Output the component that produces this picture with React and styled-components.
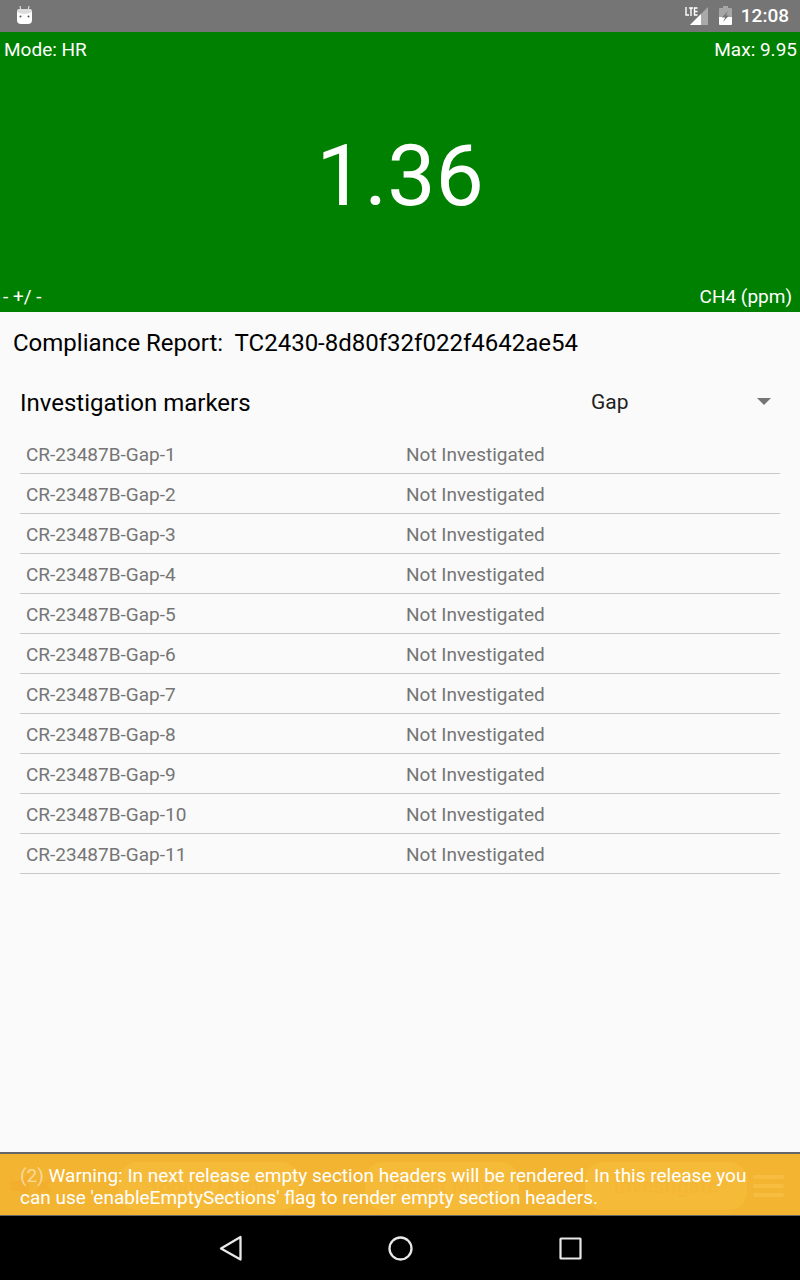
import React, { useState } from "react";
import styled, { createGlobalStyle } from "styled-components";

const GlobalStyle = createGlobalStyle`
  *, *::before, *::after { box-sizing: border-box; }
  body {
    margin: 0;
    background: #fafafa;
    color: #000;
    font-family: Roboto, "Liberation Sans", sans-serif;
  }
`;

const Screen = styled.div`
  display: flex;
  flex-direction: column;
  min-height: 100vh;
`;

const StatusBar = styled.header`
  display: flex;
  align-items: center;
  justify-content: space-between;
  height: 32px;
  padding: 0 11px 0 16px;
  background: #757575;
  color: #fff;
`;

const StatusGroup = styled.div`
  display: flex;
  align-items: center;
  gap: ${(p) => p.$gap || 0}px;
  svg { display: block; }
`;

const Clock = styled.time`
  font-size: 19px;
  font-weight: 500;
  line-height: 32px;
`;

const Reading = styled.section`
  display: flex;
  flex-direction: column;
  justify-content: space-between;
  height: 280px;
  background: #008000;
  color: #fff;
`;

const ReadingRow = styled.div`
  display: flex;
  justify-content: space-between;
  padding: ${(p) => (p.$bottom ? "0 8px 4px 3px" : "7px 3px 0 4px")};
  font-size: 19px;
  line-height: 22px;
`;

const ReadingValue = styled.output`
  padding-top: 4px;
  font-size: 86px;
  line-height: 104px;
  text-align: center;
`;

const Report = styled.main`
  flex: 1;
  padding: 16px 20px;
`;

const ReportTitle = styled.h1`
  margin: 0 -7px;
  font-size: 24px;
  font-weight: 400;
  line-height: 30px;
  white-space: pre-wrap;
`;

const MarkerHeader = styled.div`
  display: flex;
  align-items: center;
  justify-content: space-between;
  height: 60px;
  margin-top: 14px;
`;

const MarkerTitle = styled.h2`
  margin: 0;
  padding-top: 2px;
  font-size: 24px;
  font-weight: 400;
`;

const SelectField = styled.label`
  display: flex;
  align-items: center;
  width: 200px;
  padding-right: 9px;
`;

const KindSelect = styled.select`
  appearance: none;
  flex: 1;
  min-width: 0;
  height: 48px;
  margin-right: -14px;
  padding: 0 24px 0 11px;
  border: 0;
  background: transparent;
  color: #212121;
  font: 400 21px/24px Roboto, "Liberation Sans", sans-serif;
`;

const Caret = styled.svg`
  flex: none;
  margin-bottom: 2px;
  pointer-events: none;
`;

const MarkerTable = styled.table`
  width: 100%;
  margin-top: 1px;
  border-collapse: collapse;
  table-layout: fixed;
`;

const MarkerCell = styled.td`
  height: 40px;
  padding: 4px 6px 0;
  border-bottom: 1px solid #c8c8c8;
  color: #757575;
  font-size: 19px;
  line-height: 22px;
`;

const Footer = styled.footer`
  display: grid;
  height: 64px;
  border-top: 2px solid #666;
  border-bottom: 1px solid #666;
  background: #f2b431;
`;

const Toolbar = styled.nav`
  grid-area: 1 / 1;
  display: flex;
  align-items: center;
  justify-content: space-between;
  padding: 2px 16px 0 11px;
`;

const ToolGroup = styled.div`
  display: flex;
  gap: ${(p) => p.$gap}px;
  align-items: center;
`;

const IconButton = styled.button`
  padding: 0;
  border: 0;
  background: transparent;
  color: ${(p) => (p.$bright ? "#f7bd40" : "#f3ae2e")};
  svg { display: block; }
`;

const ToolButton = styled.button`
  width: ${(p) => p.$width}px;
  height: 48px;
  padding: 0;
  border: 0;
  border-radius: 18px;
  background: #f6ba39;
  color: #f4b634;
  font: 700 21px/24px Roboto, "Liberation Sans", sans-serif;
`;

const Warning = styled.p`
  grid-area: 1 / 1;
  z-index: 1;
  margin: 0;
  padding: 11px 20px 0;
  color: #fff;
  font-size: 19px;
  line-height: 22px;
  pointer-events: none;
`;

const WarningCount = styled.span`
  opacity: 0.5;
`;

const SystemBar = styled.nav`
  display: flex;
  align-items: center;
  justify-content: center;
  gap: 122px;
  height: 64px;
  background: #000;
`;

const SystemButton = styled.button`
  width: 48px;
  height: 48px;
  padding: 0;
  border: 0;
  background: transparent;
  svg { display: block; }
`;

const markers = Array.from({ length: 11 }, (_, i) => ({
  id: `CR-23487B-Gap-${i + 1}`,
  status: "Not Investigated",
}));

const DroidIcon = () => (
  <svg width="17" height="20" viewBox="0 0 17 20" aria-hidden="true">
    <path d="M4 0l1 5M13 0l-1 5" stroke="#ddd" strokeWidth="1.2" />
    <path d="M1 6Q1 3 4 3h9q3 0 3 3v8q0 4-4 4H5q-4 0-4-4z" fill="#fff" />
    <path d="M1 6Q1 3 4 3h9q3 0 3 3-4 2-7.500 2T1 6z" fill="#dcdcdc" />
    <circle cx="4.500" cy="10.500" r="1" fill="#555" />
    <circle cx="12.500" cy="10.500" r="1" fill="#555" />
  </svg>
);

const SignalIcon = () => (
  <svg width="24" height="20" viewBox="0 0 24 20" aria-hidden="true">
    <path d="M23 1v18H5z" fill="#a9a9a9" />
    <path d="M16 8v11H5z" fill="#fff" />
    <path d="M1 1v8h3M4 2h4M6 2v8M12 2H9v7h3M9 5.500h3" fill="none" stroke="#757575" strokeWidth="3" />
    <path d="M1 1v8h3M4 2h4M6 2v8M12.500 2H9.500v7h3M9.500 5.500h3" fill="none" stroke="#fff" strokeWidth="1.400" />
  </svg>
);

const BatteryIcon = () => (
  <svg width="13" height="20" viewBox="0 0 13 20" aria-hidden="true">
    <path d="M4 0h5v2h3q1 0 1 1v8H0V3q0-1 1-1h3z" fill="#a6a6a6" />
    <path d="M0 11h13v7q0 1-1 1H1q-1 0-1-1z" fill="#fff" />
    <path d="M9 5l-6 6.500h3.200L4 16l6-6.500H7z" fill="#757575" />
  </svg>
);

export default function App() {
  const [kind, setKind] = useState("Gap");
  return (
    <>
      <GlobalStyle />
      <Screen>
        <StatusBar>
          <StatusGroup><DroidIcon /></StatusGroup>
          <StatusGroup $gap={9}>
            <StatusGroup $gap={10}>
              <SignalIcon />
              <BatteryIcon />
            </StatusGroup>
            <Clock>12:08</Clock>
          </StatusGroup>
        </StatusBar>
        <Reading>
          <ReadingRow><span>Mode: HR</span><span>Max: 9.95</span></ReadingRow>
          <ReadingValue>1.36</ReadingValue>
          <ReadingRow $bottom><span>- +/ -</span><span>CH4 (ppm)</span></ReadingRow>
        </Reading>
        <Report>
          <ReportTitle>{"Compliance Report:  TC2430-8d80f32f022f4642ae54"}</ReportTitle>
          <MarkerHeader>
            <MarkerTitle>Investigation markers</MarkerTitle>
            <SelectField>
              <KindSelect aria-label="Marker type" value={kind} onChange={(e) => setKind(e.target.value)}>
                <option>Gap</option>
              </KindSelect>
              <Caret width="14" height="7" viewBox="0 0 14 7" aria-hidden="true">
                <path d="M0 0h14L7 7z" fill="#757575" />
              </Caret>
            </SelectField>
          </MarkerHeader>
          <MarkerTable>
            <tbody>
              {markers.map((m) => (
                <tr key={m.id}>
                  <MarkerCell>{m.id}</MarkerCell>
                  <MarkerCell>{m.status}</MarkerCell>
                </tr>
              ))}
            </tbody>
          </MarkerTable>
        </Report>
        <Footer>
          <Toolbar>
            <IconButton aria-label="Mute">
              <svg width="42" height="32" viewBox="0 0 42 32" aria-hidden="true">
                <path d="M0 11h8l10-7v24l-10-7H0z" fill="currentColor" />
                <path d="M27 10l12 12M39 10L27 22" stroke="currentColor" strokeWidth="4" />
              </svg>
            </IconButton>
            <ToolGroup $gap={66}>
              <ToolButton $width={180}>Toggle Mode</ToolButton>
              <ToolButton $width={154}>Reset Max</ToolButton>
              <ToolGroup $gap={6}>
                <ToolButton $width={162}>Investigate</ToolButton>
                <IconButton $bright aria-label="Menu">
                  <svg width="31" height="24" viewBox="0 0 31 24" aria-hidden="true">
                    <path d="M2 3h27M2 12h27M2 21h27" stroke="currentColor" strokeWidth="4" strokeLinecap="round" />
                  </svg>
                </IconButton>
              </ToolGroup>
            </ToolGroup>
          </Toolbar>
          <Warning>
            <WarningCount>(2)</WarningCount> Warning: In next release empty section headers will be rendered. In this release you can use 'enableEmptySections' flag to render empty section headers.
          </Warning>
        </Footer>
        <SystemBar>
          <SystemButton aria-label="Back">
            <svg width="48" height="48" viewBox="0 0 48 48" aria-hidden="true">
              <path d="M34.500 13v22.500L15 24.500z" fill="none" stroke="#e8e8e8" strokeWidth="2.300" strokeLinejoin="round" />
            </svg>
          </SystemButton>
          <SystemButton aria-label="Home">
            <svg width="48" height="48" viewBox="0 0 48 48" aria-hidden="true">
              <circle cx="24.500" cy="24.500" r="11" fill="none" stroke="#e8e8e8" strokeWidth="2.300" />
            </svg>
          </SystemButton>
          <SystemButton aria-label="Recent apps">
            <svg width="48" height="48" viewBox="0 0 48 48" aria-hidden="true">
              <rect x="14.500" y="14.500" width="20" height="20" rx="0.500" fill="none" stroke="#e8e8e8" strokeWidth="2.200" />
            </svg>
          </SystemButton>
        </SystemBar>
      </Screen>
    </>
  );
}
